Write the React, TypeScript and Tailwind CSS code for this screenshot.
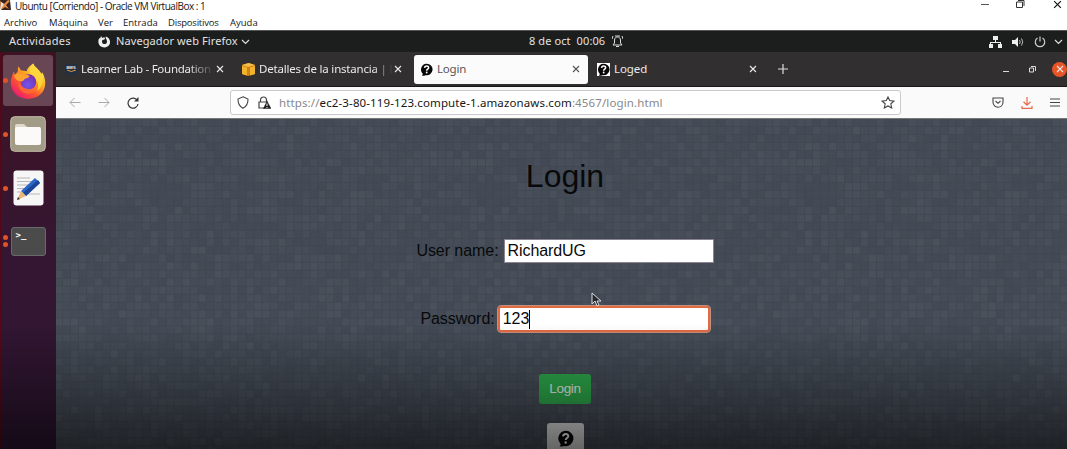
import React from "react";

type BoxProps = { className?: string; children?: React.ReactNode };

const CELL = 7.98;

function noise(x: number, y: number) {
  let n = Math.imul(x + 17, 374761393) ^ Math.imul(y + 31, 668265263);
  n = Math.imul(n ^ (n >>> 13), 1274126177);
  return ((n ^ (n >>> 16)) >>> 0) / 4294967295;
}

function Mosaic() {
  const cells: React.ReactElement[] = [];
  for (let y = 0; y < 43; y++) {
    for (let x = 0; x < 128; x++) {
      const v = noise(x % 41, y);
      const fill = v > 0.52 ? "#fff" : "#101820";
      const opacity = v > 0.52 ? (v - 0.5) * 0.05 : (0.52 - v) * 0.11;
      cells.push(
        <rect key={`${x}-${y}`} x={x * CELL - 1} y={y * CELL} width={CELL - 0.8} height={CELL - 0.8} fill={fill} opacity={opacity} />,
      );
    }
  }
  return (
    <svg className="absolute inset-0" width="1011" height="340" aria-hidden="true">
      <rect width="1011" height="340" fill="#3f4650" />
      <defs>
        <pattern id="tiles" width={CELL} height={CELL} patternUnits="userSpaceOnUse" x="-1">
          <rect width={CELL - 0.8} height={CELL - 0.8} fill="#464d58" />
        </pattern>
      </defs>
      <rect width="1011" height="340" fill="url(#tiles)" />
      {cells}
    </svg>
  );
}

function Cross({ className }: BoxProps) {
  return (
    <svg className={className} viewBox="0 0 8 8" fill="none" stroke="currentColor" strokeWidth="1.1">
      <path d="M1 1l6 6M7 1L1 7" />
    </svg>
  );
}

function Chevron() {
  return (
    <svg width="9" height="6" viewBox="0 0 9 6" fill="none" stroke="#ddd" strokeWidth="1.2">
      <path d="M1 1l3.500 3.500L8 1" />
    </svg>
  );
}

function Question({ size }: { size: number }) {
  return (
    <svg width={size} height={size} viewBox="0 0 16 16">
      <path d="M8 .8a7.200 7.200 0 1 1-1.400 14.200c-1.300.7-3 .8-4.200.4.7-.6 1.100-1.500 1-2.300A7.200 7.200 0 0 1 8 .8z" fill="#060606" />
      <path d="M5.700 6c.1-3 4.900-3 4.900-.2C10.600 7.500 8.200 7.600 8.200 9.400" fill="none" stroke="#fff" strokeWidth="1.900" />
      <circle cx="8.200" cy="11.700" r="1.150" fill="#fff" />
    </svg>
  );
}

function FirefoxIcon() {
  return (
    <svg width="37" height="38" viewBox="0 0 37 38">
      <defs>
        <linearGradient id="fox" x1=".85" y1=".1" x2=".2" y2=".95">
          <stop offset="0" stopColor="#fff04a" />
          <stop offset=".35" stopColor="#ffac24" />
          <stop offset=".65" stopColor="#ff542f" />
          <stop offset="1" stopColor="#e91a72" />
        </linearGradient>
        <radialGradient id="globe" cx=".45" cy=".7" r=".7">
          <stop offset="0" stopColor="#7157ef" />
          <stop offset="1" stopColor="#7b2dac" />
        </radialGradient>
      </defs>
      <path d="M24 1c1 4 6 6 8 11l1-2c5 8 4 18-2 23-7 6-18 6-25 0C0 27 0 19 2 14l2-5 1 4 3-4c0-2 0-4 1-5l2 4 6 1c1-4 4-6 7-8z" fill="url(#fox)" />
      <path d="M24 1c1 4 7 6 9 12 2 8-2 14-5 16 2-7-1-12-5-15-5-3-3-9 1-13z" fill="#ffd83e" opacity=".85" />
      <circle cx="19" cy="20" r="8" fill="url(#globe)" />
      <path d="M4 13c3-2 6-3 9-1 2 1 6 0 7 2-1 2-3 2-5 3-1 2-3 3-5 2-3 0-5-3-6-6z" fill="#ffa12d" />
      <path d="M9 19c1 4 4 7 9 8 6 1 10-2 10-7 3 7-2 12-9 12-7 0-12-6-10-13z" fill="#ff742d" opacity=".65" />
    </svg>
  );
}

function DockItem({ dots = 1, children, className = "" }: BoxProps & { dots?: number }) {
  return (
    <div className={`flex w-full items-center ${className}`}>
      <div className="flex w-[9px] shrink-0 flex-col items-center gap-[2px] pr-[1px]">
        {Array.from({ length: dots }, (_, i) => (
          <i key={i} className="size-[5px] rounded-full bg-[#e35227]" />
        ))}
      </div>
      <div className="flex w-9 justify-center">{children}</div>
    </div>
  );
}

function Dock() {
  return (
    <nav className="flex w-[56px] shrink-0 flex-col border-l border-[#540817] bg-linear-to-b from-[#3e1222] via-[#351632] to-[#2d1531] pt-[3px]">
      <div className="ml-[2px] flex h-[51px] w-[50px] items-center rounded-[3px] bg-[#684653]">
        <DockItem className="-ml-[2px]"><FirefoxIcon /></DockItem>
      </div>
      <DockItem className="mt-[10px] h-9">
        <svg width="36" height="36" viewBox="0 0 36 36">
          <rect x=".7" y=".7" width="34.600" height="34.600" rx="4" fill="#a29b86" stroke="#c3bda7" />
          <path d="M5 27V10q0-2 2-2h7l3 3h13v16z" fill="#ded9ca" />
          <rect x="5" y="11" width="26" height="18" rx="2" fill="#fbfaf8" />
        </svg>
      </DockItem>
      <DockItem className="mt-[18px] h-9">
        <svg width="31" height="36" viewBox="0 0 31 36">
          <rect x=".5" y=".5" width="30" height="35" rx="3" fill="#f6f6f7" />
          <path d="M4 8h13M4 11.500h15M4 15h14M4 18.500h12M4 22h10M15 24h12" stroke="#b8b8b6" strokeWidth="1" />
          <path d="M8 21L22 8l5 5-14 13z" fill="#2c66c8" />
          <path d="M10 23L25 10l2 3-14 13z" fill="#194696" />
          <path d="M8 21l5 5-9 4z" fill="#e9b879" />
          <path d="M5 27l2 2-3 1z" fill="#333" />
        </svg>
      </DockItem>
      <DockItem dots={2} className="mt-[20px] h-[30px]">
        <div className="flex h-[29px] w-[35px] rounded-[3px] border border-[#686b69] bg-[#4b4b4b] pl-1 pt-[2px] font-['DejaVu_Sans_Mono',monospace] text-[9px] font-bold leading-[10px] text-white">&gt;_</div>
      </DockItem>
    </nav>
  );
}

function SystemBar() {
  return (
    <header className="flex h-[22px] shrink-0 items-center border-t border-[#555] bg-[#1c1d1d] font-['Noto_Sans',sans-serif] text-[11px] text-[#e2e2e2]">
      <span className="w-[89px] whitespace-nowrap pl-[9px] tracking-[0.28px]">Actividades</span>
      <svg className="ml-[9px]" width="13" height="13" viewBox="0 0 13 13">
        <path d="M3 1l1.300 2c1-.7 2-.5 3 0L6 5c-1-.4-2 .1-2 1.500 0 3.500 5 3.400 5 0C9 5 8 4 7.500 1.500c6 1 6.500 10.500-1 10.900C-.5 12-.5 5 1.500 3l.7.5z" fill="#eee" />
      </svg>
      <span className="ml-[5px] w-[125px] whitespace-nowrap tracking-[0.1px]">Navegador web Firefox</span>
      <Chevron />
      <span className="ml-[279px] w-[79px] whitespace-pre tracking-[0.1px]">8 de oct  00:06</span>
      <svg className="ml-[4px]" width="11" height="13" viewBox="0 0 11 13" fill="none" stroke="#ddd">
        <path d="M1 10h9L8.500 8V5c0-4-6-4-6 0v3zM4 11.500h3M1 1L0 4M10 1l1 3M3 1h5" />
      </svg>
      <svg className="ml-auto" width="13" height="12" viewBox="0 0 13 12" fill="#eee">
        <path d="M4 0h5v4H7v2h5v2h1v4H9V8h2V7H2v1h2v4H0V8h1V6h5V4H4z" />
      </svg>
      <svg className="ml-[10px]" width="13" height="12" viewBox="0 0 13 12" fill="none" stroke="#bbb">
        <path d="M0 4h3l3-3v10L3 8H0z" fill="#eee" stroke="none" />
        <path d="M7.500 4q1.500 2 0 4M9.500 2.500q2.500 3.500 0 7" />
      </svg>
      <svg className="ml-[9px]" width="12" height="12" viewBox="0 0 12 12" fill="none" stroke="#ccc" strokeWidth="1.200">
        <path d="M3.500 2a4.700 4.700 0 1 0 5 0M6 .5v5" />
      </svg>
      <span className="ml-[8px] mr-[4px] flex"><Chevron /></span>
    </header>
  );
}

function Tabs() {
  return (
    <div className="flex h-[35px] shrink-0 items-center border-b border-[#171717] bg-[#322f31] font-['Noto_Sans',sans-serif] text-[11.500px] text-[#eaeaea]">
      <div className="flex w-[177px] items-center pl-[9px]">
        <div className="flex h-[11px] w-[12px] flex-col items-center rounded-[2px] bg-[#232f42] font-['Liberation_Sans',sans-serif] text-[5px] font-bold leading-[6px]">
          aws
          <svg width="9" height="3" viewBox="0 0 9 3"><path d="M0 0q4 3 9 0" fill="none" stroke="#d79b4b" /></svg>
        </div>
        <span className="ml-[4px] w-[134px] whitespace-nowrap tracking-[-0.26px] mask-r-from-80%">Learner Lab - Foundation</span>
        <Cross className="ml-[1px] size-2" />
      </div>
      <div className="flex w-[181px] items-center pl-[9px]">
        <svg width="13" height="13" viewBox="0 0 13 13">
          <path d="M0 2l6-2 7 2v9l-7 2-6-2z" fill="#ce8413" /><path d="M0 2l6 2 7-2-6-2z" fill="#f5bd4a" /><path d="M0 3l5 1.500v8L0 11zM8 4.500L13 3v8l-5 1.500z" fill="#f4b32e" />
        </svg>
        <span className="ml-[4px] w-[134px] whitespace-nowrap tracking-[-0.2px] mask-r-from-85%">Detalles de la instancia | E</span>
        <Cross className="ml-[1px] size-2" />
      </div>
      <div className="flex h-[29px] w-[174px] items-center rounded-[3px] bg-[#fbfbfc] px-[6px] text-[#555]">
        <Question size={13} />
        <span className="ml-[4px] tracking-[-0.2px]">Login</span>
        <Cross className="ml-auto mr-[2px] size-2" />
      </div>
      <div className="flex w-[183px] items-center pl-[9px]">
        <span className="flex bg-white"><Question size={13} /></span>
        <span className="ml-[4px] tracking-[-0.1px]">Loged</span>
        <Cross className="ml-auto mr-[14px] size-2" />
      </div>
      <svg className="ml-[7px]" width="10" height="10" viewBox="0 0 10 10"><path d="M5 0v10M0 5h10" stroke="#ddd" strokeWidth="1.200" /></svg>
      <i className="ml-auto mr-[20px] mt-1 h-px w-[6px] bg-[#ddd]" />
      <svg className="mr-[16px]" width="7" height="7" viewBox="0 0 7 7" fill="none" stroke="#ddd"><path d="M.5 2h4v4h-4zM2 .5h4.500V5" /></svg>
      <span className="flex size-[15px] items-center justify-center rounded-full bg-[#e75427]"><Cross className="size-2" /></span>
    </div>
  );
}

function AddressBar() {
  return (
    <div className="flex h-8 shrink-0 items-center border-b border-[#777] bg-[#fafafb] text-[#444]">
      <svg className="ml-[13px]" width="12" height="11" viewBox="0 0 12 11" fill="none" stroke="#aaa"><path d="M11.500 5.500H1M5.500 1L1 5.500 5.500 10" /></svg>
      <svg className="ml-[17px]" width="12" height="11" viewBox="0 0 12 11" fill="none" stroke="#aaa"><path d="M.5 5.500H11M6.500 1L11 5.500 6.500 10" /></svg>
      <svg className="ml-[17px]" width="12" height="12" viewBox="0 0 12 12" fill="none" stroke="#333" strokeWidth="1.200"><path d="M10.300 3.500A5 5 0 1 0 11 7" /><path d="M7 4.500h4.500V0z" fill="#333" stroke="none" /></svg>
      <div className="ml-[91px] flex h-[25px] w-[671px] items-center rounded-[3px] border border-[#c9c9cb] bg-white">
        <svg className="ml-[6px]" width="12" height="13" viewBox="0 0 12 13" fill="none" stroke="#444" strokeWidth="1.100"><path d="M6 .8l5 2.200q.2 6.500-5 9.300Q.8 9.500 1 3z" /></svg>
        <svg className="ml-[9px]" width="13" height="13" viewBox="0 0 13 13"><path d="M2.500 6V4C2.500 0 8.500 0 8.500 4v2M7 12H1V6h9" fill="none" stroke="#444" strokeWidth="1.200" /><path d="M9 4.800l4.500 8H5z" fill="#222" /><path d="M9 7.500v2.500M9 11v1" stroke="#fff" /></svg>
        <span className="ml-[8px] whitespace-nowrap font-['Noto_Sans',sans-serif] text-[11.500px] tracking-[0.12px] text-[#888]">
          https://<span className="text-[#171717]">ec2-3-80-119-123.compute-1.amazonaws.com</span>:4567/login.html
        </span>
        <svg className="ml-auto mr-[5px]" width="14" height="13" viewBox="0 0 14 13" fill="none" stroke="#444" strokeWidth="1.100"><path d="M7 1l1.700 3.600 4.300.5-3.200 2.700.9 4.200L7 10l-3.700 2 .9-4.200L1 5.100l4.300-.5z" /></svg>
      </div>
      <svg className="ml-auto" width="12" height="11" viewBox="0 0 12 11" fill="none" stroke="#444" strokeWidth="1.100"><path d="M1 1h10v4c0 7-10 7-10 0zM3.500 4L6 6.300 8.500 4" /></svg>
      <svg className="ml-[17px]" width="12" height="12" viewBox="0 0 12 12" fill="none" stroke="#e66c48" strokeWidth="1.200"><path d="M6 0v8M2.500 4.800L6 8.200l3.500-3.400M1 9v2.300h10V9" /></svg>
      <svg className="ml-[17px] mr-[7px]" width="10" height="9" viewBox="0 0 10 9" stroke="#444"><path d="M0 1h10M0 4.500h10M0 8h10" /></svg>
    </div>
  );
}

function LoginPage() {
  return (
    <main className="relative flex-1 overflow-hidden">
      <Mosaic />
      <div className="relative flex flex-col items-center pl-[7px] font-['Liberation_Sans',sans-serif] text-[16px] text-[#08090a]">
        <h1 className="mt-[38px] text-[32px] leading-[38px]">Login</h1>
        <label className="mt-[43px] flex h-[25px] items-center gap-[5px]">
          <span className="pt-px tracking-[-0.05px]">User name:</span>
          <input className="h-[24px] w-[210px] border border-[#8b8593] bg-white px-[3px] pt-px text-[16px] tracking-[-0.1px] outline-none" defaultValue="RichardUG" />
        </label>
        <label className="mt-[42px] flex h-[27px] items-center gap-[3px]">
          <span className="pt-px tracking-[-0.05px]">Password:</span>
          <span className="flex h-[26px] w-[212px] items-center rounded-[3px] border-2 border-[#e06a42] bg-white pl-[3px] pt-px outline outline-[#c58f7d]">
            123<i className="h-[19px] w-px bg-black" />
          </span>
        </label>
        <button className="mt-[42px] h-[30px] w-[52px] rounded-[3px] bg-[#2da84a] pt-px text-[13.500px] tracking-[-0.3px] text-[#e5eee8]">Login</button>
        <div className="mt-[19px] flex h-[34px] w-[37px] justify-center rounded-[3px] bg-[#e1e1e1] pt-[7px]"><Question size={17} /></div>
      </div>
      <svg className="absolute left-[535px] top-[173px]" width="11" height="15" viewBox="0 0 11 15"><path d="M1 1v11l3-3 2 5 2-1-2-4h4z" fill="#252a30" stroke="#d9dcdf" strokeWidth="1" /></svg>
    </main>
  );
}

export default function App() {
  return (
    <div className="relative flex h-[449px] w-[1067px] flex-col overflow-hidden bg-white">
      <div className="flex h-[30px] shrink-0 font-['Open_Sans',sans-serif] text-[10px] text-[#161616]">
        <div className="flex-1">
          <div className="flex h-[13px] items-start">
            <svg width="12" height="11" viewBox="0 0 12 11"><path d="M0 0h10l1 10H1z" fill="#36231d" /><path d="M0 1l4 3 4-4 2 1-4 4 3 4-4-2-4 3z" fill="#e78b43" /><path d="M1 2l3 2-3 5z" fill="#e8e4df" /></svg>
            <span className="ml-[3px] whitespace-nowrap leading-[12px] tracking-[-0.48px]">Ubuntu [Corriendo] - Oracle VM VirtualBox : 1</span>
          </div>
          <div className="flex h-[17px] items-center whitespace-nowrap pl-[4px] pt-[3px] text-[9.500px]">
            <span className="w-[45px]">Archivo</span>
            <span className="w-[49px]">Máquina</span>
            <span className="w-[25px]">Ver</span>
            <span className="w-[45px]">Entrada</span>
            <span className="w-[62px] tracking-[-0.2px]">Dispositivos</span>
            <span>Ayuda</span>
          </div>
        </div>
        <div className="flex h-2 items-center pr-[5px]">
          <i className="mr-[27px] h-px w-[8px] bg-[#555]" />
          <svg className="mr-[28px]" width="9" height="8" viewBox="0 0 9 8" fill="none" stroke="#333"><path d="M.5 2h6v5.500h-6zM2 .5h6V6" /></svg>
          <Cross className="size-[9px]" />
        </div>
      </div>
      <SystemBar />
      <div className="flex min-h-0 flex-1">
        <Dock />
        <div className="flex min-w-0 flex-1 flex-col">
          <Tabs />
          <AddressBar />
          <LoginPage />
        </div>
      </div>
      <div className="pointer-events-none absolute inset-x-0 bottom-0 h-[125px] bg-linear-to-b from-transparent via-black/25 to-black/55" />
    </div>
  );
}
